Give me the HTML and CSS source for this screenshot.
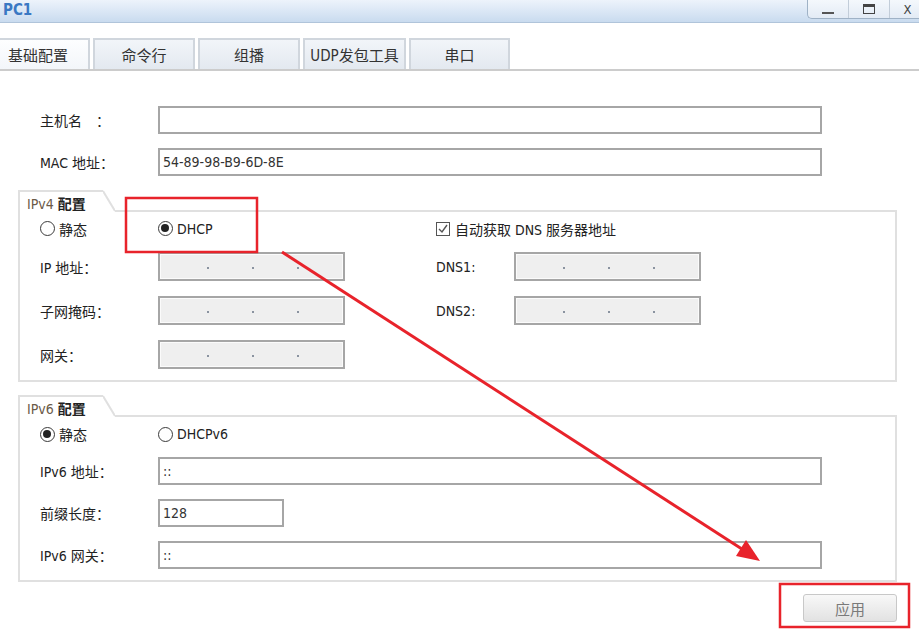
FILE: index.html
```html
<!DOCTYPE html>
<html lang="zh-CN">
<head>
<meta charset="utf-8">
<title>PC1</title>
<link rel="stylesheet" href="styles.css">
</head>
<body>
<div class="window">
  <header class="titlebar">
    <div class="title">PC1</div>
    <div class="controls">
      <div class="ctl ctl-min"><span class="ico-min"></span></div>
      <div class="ctl ctl-max"><span class="ico-max"></span></div>
      <div class="ctl ctl-close">X</div>
    </div>
  </header>

  <nav class="tabs">
    <div class="tab tab-first tab-active">基础配置</div>
    <div class="tab tab-w102">命令行</div>
    <div class="tab tab-w102">组播</div>
    <div class="tab tab-w103">UDP发包工具</div>
    <div class="tab tab-w101">串口</div>
  </nav>

  <main class="content">
    <div class="basic">
      <div class="lbl">主机名　：</div>
      <input class="field" type="text" value="">
      <div class="lbl">MAC 地址：</div>
      <input class="field" type="text" value="54-89-98-B9-6D-8E">
    </div>

    <section class="group group-v4">
      <div class="group-head">
        <div class="group-tab"><span class="gt-lat">IPv4</span> <b>配置</b></div>
        <svg class="slant" width="12" height="22" viewBox="0 0 12 22"><line x1="0" y1="1" x2="12" y2="21" stroke="#e0e0e0" stroke-width="2"/></svg>
        <div class="group-rest"></div>
      </div>
      <div class="group-body v4-grid">
        <div class="opt"><span class="radio"></span>静态</div>
        <div class="opt"><span class="radio radio-on"></span>DHCP</div>
        <div class="opt opt-wide"><span class="checkbox"><svg width="12" height="12" viewBox="0 0 12 12"><polyline points="2,6 5,9 10,2" fill="none" stroke="#555" stroke-width="1.4"/></svg></span>自动获取 DNS 服务器地址</div>

        <div class="lbl">IP 地址：</div>
        <div class="ip"><i></i><i></i><i></i></div>
        <div class="lbl">DNS1:</div>
        <div class="ip"><i></i><i></i><i></i></div>

        <div class="lbl">子网掩码：</div>
        <div class="ip"><i></i><i></i><i></i></div>
        <div class="lbl">DNS2:</div>
        <div class="ip"><i></i><i></i><i></i></div>

        <div class="lbl">网关：</div>
        <div class="ip"><i></i><i></i><i></i></div>
      </div>
    </section>

    <section class="group group-v6">
      <div class="group-head">
        <div class="group-tab"><span class="gt-lat">IPv6</span> <b>配置</b></div>
        <svg class="slant" width="12" height="22" viewBox="0 0 12 22"><line x1="0" y1="1" x2="12" y2="21" stroke="#e0e0e0" stroke-width="2"/></svg>
        <div class="group-rest"></div>
      </div>
      <div class="group-body v6-grid">
        <div class="opt"><span class="radio radio-on"></span>静态</div>
        <div class="opt"><span class="radio"></span>DHCPv6</div>

        <div class="lbl">IPv6 地址：</div>
        <input class="field" type="text" value="::">

        <div class="lbl">前缀长度：</div>
        <input class="field field-short" type="text" value="128">

        <div class="lbl">IPv6 网关：</div>
        <input class="field" type="text" value="::">
      </div>
    </section>

    <div class="actions">
      <button class="apply" type="button">应用</button>
    </div>
  </main>

  <svg class="annot" width="919" height="633" viewBox="0 0 919 633">
    <rect x="126" y="198" width="131" height="54" fill="none" stroke="#e8232b" stroke-width="2.5"/>
    <rect x="780" y="584" width="129" height="43" fill="none" stroke="#e8232b" stroke-width="2.5"/>
    <line x1="282" y1="252" x2="745" y2="551" stroke="#e8232b" stroke-width="3"/>
    <polygon points="760,561 736,556 746,540" fill="#e8232b"/>
  </svg>
</div>
</body>
</html>
```

FILE: styles.css
```css
* { box-sizing: border-box; }

html, body {
  margin: 0;
  padding: 0;
  background: #ffffff;
}

body {
  font-family: "DejaVu Sans Condensed", "Liberation Sans", "Noto Sans CJK SC", sans-serif;
  font-size: 14px;
  color: #222;
}

.window {
  position: relative;
  width: 919px;
  height: 633px;
  overflow: hidden;
  background: #fff;
}

/* Title bar */
.titlebar {
  height: 23px;
  display: flex;
  justify-content: space-between;
  align-items: flex-start;
  background: linear-gradient(#edf3fb, #c9dbef);
  border-bottom: 1px solid #b0c4da;
}

.title {
  font-weight: bold;
  font-size: 15px;
  line-height: 20px;
  color: #3a78c3;
  padding-left: 3px;
}

.controls {
  display: flex;
  height: 19px;
  border-left: 1px solid #9fb2c6;
  border-bottom: 1px solid #9fb2c6;
  border-bottom-left-radius: 5px;
  background: linear-gradient(#f4f8fc, #e3ebf5);
}

.ctl {
  display: flex;
  align-items: center;
  justify-content: center;
  height: 18px;
}

.ctl-min { width: 40px; }
.ctl-max { width: 41px; border-left: 1px solid #c2cdd9; }
.ctl-close {
  width: 30px;
  border-left: 1px solid #c2cdd9;
  font-size: 13px;
  color: #444;
  padding-left: 6px;
}

.ico-min {
  display: block;
  width: 12px;
  height: 2px;
  background: #555;
  margin-top: 7px;
}

.ico-max {
  display: block;
  width: 12px;
  height: 10px;
  border: 1px solid #444;
  border-top-width: 3px;
}

/* Tabs */
.tabs {
  display: flex;
  gap: 3px;
  margin-top: 15px;
  height: 33px;
  border-bottom: 2px solid #cccccc;
}

.tab {
  display: flex;
  align-items: center;
  justify-content: center;
  font-size: 15px;
  color: #333;
  border: 2px solid #d0d6dd;
  border-bottom: none;
  background: linear-gradient(#f2f5f9, #e3e9f0);
}

.tab-first {
  width: 90px;
  justify-content: flex-start;
  padding-left: 8px;
  border-left: none;
}

.tab-active { background: linear-gradient(#fdfeff, #f3f6fa); }
.tab-w102 { width: 102px; }
.tab-w103 { width: 103px; }
.tab-w101 { width: 101px; }

/* Content */
.content {
  padding: 0 22px 0 18px;
}

.lbl {
  color: #222;
  white-space: nowrap;
}

.field {
  height: 28px;
  width: 664px;
  border: 2px solid #a6a6a6;
  background: #fff;
  padding: 0 3px;
  font: inherit;
  font-size: 14px;
  color: #333;
  outline: none;
}

.field-short { width: 126px; justify-self: start; }

.basic {
  display: grid;
  grid-template-columns: 118px 664px;
  grid-auto-rows: 28px;
  row-gap: 14px;
  align-items: center;
  padding: 35px 0 0 22px;
}

/* Group boxes */
.group { margin-top: 14px; }
.group-v6 { margin-top: 13px; }

.group-head {
  display: flex;
  height: 22px;
}

.group-tab {
  width: 85px;
  border-top: 2px solid #e0e0e0;
  border-left: 2px solid #e0e0e0;
  padding: 3px 0 0 7px;
  line-height: 18px;
  font-size: 14px;
  color: #444;
  white-space: nowrap;
}

.group-tab .gt-lat { color: #6b5a48; }
.group-tab b { color: #222; }

.slant { display: block; flex: none; }

.group-rest {
  flex: 1;
  border-bottom: 2px solid #e0e0e0;
}

.group-body {
  border: 2px solid #e0e0e0;
  border-top: none;
  padding: 8px 0 11px 20px;
  display: grid;
  align-items: center;
}

.v4-grid {
  grid-template-columns: 118px 278px 78px 187px;
  grid-template-rows: 17px 29px 29px 29px;
  row-gap: 15px;
}

.v6-grid {
  grid-template-columns: 118px 664px;
  grid-template-rows: 18px 28px 28px 28px;
  row-gap: 14px;
}

.opt {
  display: flex;
  align-items: center;
  gap: 4px;
  white-space: nowrap;
}

.opt-wide { grid-column: 3 / span 2; gap: 5px; }

.radio {
  position: relative;
  width: 15px;
  height: 15px;
  border: 1.5px solid #3a3a3a;
  border-radius: 50%;
  background: #fff;
  flex: none;
}

.radio-on::after {
  content: "";
  position: absolute;
  left: 2px;
  top: 2px;
  width: 8px;
  height: 8px;
  border-radius: 50%;
  background: #222;
}

.checkbox {
  display: flex;
  align-items: center;
  justify-content: center;
  width: 14px;
  height: 14px;
  border: 1px solid #555;
  background: #fff;
  flex: none;
}

.checkbox svg { display: block; }

.ip {
  width: 187px;
  height: 29px;
  border: 2px solid #a6a6a6;
  background: #efefef;
  box-shadow: inset 0 0 0 1px #fbfbfb;
  display: flex;
  align-items: center;
  padding: 3px 0 0 47px;
  gap: 43px;
}

.ip i {
  display: block;
  width: 2px;
  height: 2px;
  background: #8a93a0;
}

/* Actions */
.actions {
  display: flex;
  justify-content: flex-end;
  margin-top: 12px;
}

.apply {
  width: 94px;
  height: 28px;
  border: 1px solid #c8c8c8;
  border-radius: 3px;
  background: linear-gradient(#f8f8f8, #e2e2e2);
  color: #7a7a7a;
  font-family: "Noto Sans CJK SC", sans-serif;
  font-size: 15px;
  padding: 0;
}

/* Annotation overlay */
.annot {
  position: absolute;
  left: 0;
  top: 0;
  pointer-events: none;
}
```
